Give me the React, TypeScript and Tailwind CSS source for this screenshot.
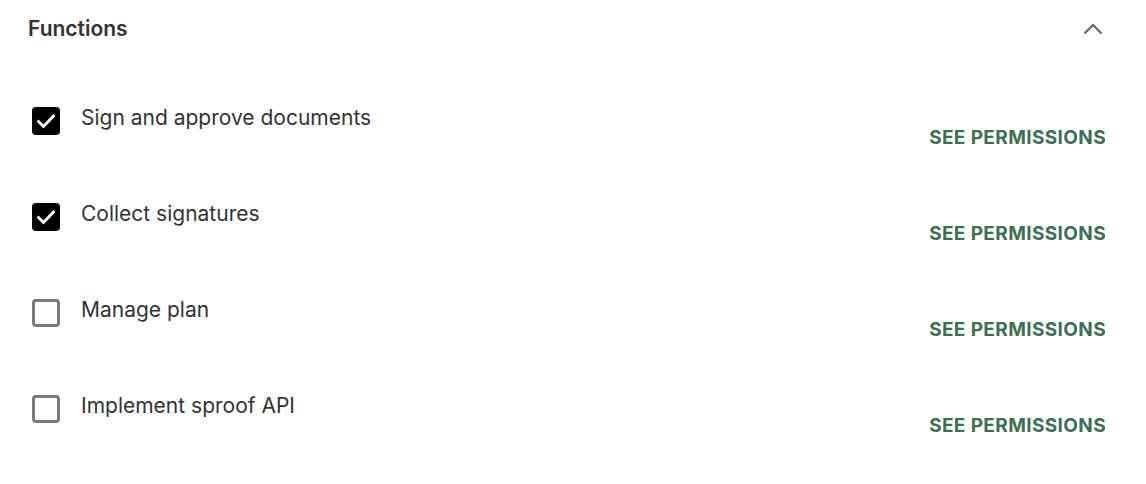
import React from 'react';

interface FunctionRowProps {
  label: string;
  checked: boolean;
}

const FunctionRow: React.FC<FunctionRowProps> = ({ label, checked }) => {
  return (
    <div className="flex h-[96px] items-start justify-between pl-[32px] pr-[40px]">
      <label className="flex items-start gap-[21px] cursor-pointer">
        {checked ? (
          <span className="mt-[7px] flex h-[28px] w-[28px] items-center justify-center rounded-[4px] bg-black">
            <svg width="20" height="16" viewBox="0 0 20 16" fill="none">
              <path d="M2.5 8.5l5 5 10-10.5" stroke="white" strokeWidth="2.8" strokeLinecap="square" />
            </svg>
          </span>
        ) : (
          <span className="mt-[7px] h-[28px] w-[28px] rounded-[4px] border-[3px] border-[#7a7a7a] bg-white" />
        )}
        <span className="mt-[4px] text-[21px] leading-[28px] text-[#333333]">{label}</span>
      </label>
      <button className="mt-[26px] text-[19px] font-bold leading-[24px] tracking-[0.02em] text-[#3b7150]">
        SEE PERMISSIONS
      </button>
    </div>
  );
};

const rows = [
  { label: 'Sign and approve documents', checked: true },
  { label: 'Collect signatures', checked: true },
  { label: 'Manage plan', checked: false },
  { label: 'Implement sproof API', checked: false },
];

export default function App() {
  return (
    <div className="min-h-screen w-full bg-white" style={{ fontFamily: 'Inter, "Noto Sans", sans-serif' }}>
      {/* Header */}
      <div className="flex h-[58px] items-center justify-between pl-[28px] pr-[43px]">
        <h2 className="text-[21px] font-semibold text-[#333333]">Functions</h2>
        <svg width="20" height="12" viewBox="0 0 20 12" fill="none">
          <polyline points="1.5,10.5 10,2 18.5,10.5" stroke="#666666" strokeWidth="2.2" />
        </svg>
      </div>

      {/* Rows */}
      <div className="mt-[42px]">
        {rows.map((row) => (
          <FunctionRow key={row.label} label={row.label} checked={row.checked} />
        ))}
      </div>
    </div>
  );
}
